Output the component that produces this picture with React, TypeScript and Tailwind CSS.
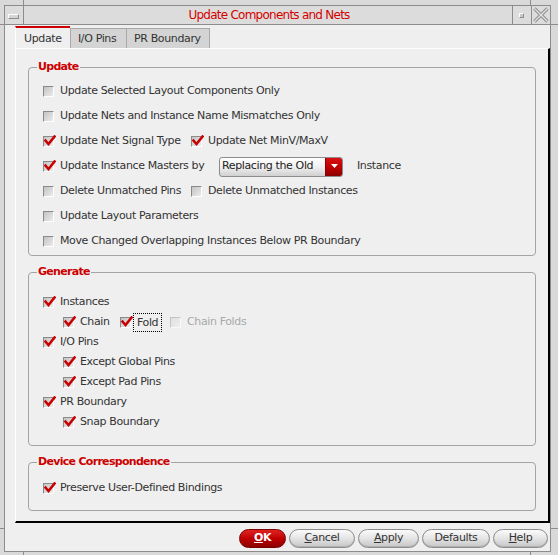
import React from "react";

function Box({ checked, disabled }: { checked?: boolean; disabled?: boolean }) {
  return (
    <span
      className={
        disabled
          ? "relative inline-block w-[11px] h-[11px] shrink-0 border border-t-[#c4c4c4] border-l-[#c4c4c4] border-b-[#f8f8f8] border-r-[#f8f8f8] bg-gradient-to-br from-[#e0e0e0] to-[#eeeeee]"
          : "relative inline-block w-[11px] h-[11px] shrink-0 border border-t-[#8a8a8a] border-l-[#8a8a8a] border-b-white border-r-white bg-gradient-to-br from-[#c4c4c4] to-[#ebebeb]"
      }
    >
      {checked && (
        <svg className="absolute left-[0px] top-[-2px]" width="12" height="12" viewBox="0 0 12 12">
          <path d="M1.5 5.5 L4.5 9 L10.5 1.5" fill="none" stroke="#c80000" strokeWidth="2.5" strokeLinecap="square" />
        </svg>
      )}
    </span>
  );
}

function Check({
  label,
  checked,
  disabled,
  focus,
  className,
}: {
  label: string;
  checked?: boolean;
  disabled?: boolean;
  focus?: boolean;
  className?: string;
}) {
  return (
    <div className={"flex items-center " + (className ?? "")}>
      <Box checked={checked} disabled={disabled} />
      {focus ? (
        <span className="ml-[2px] border border-dotted border-black px-[3px] leading-[17px] text-[#333]">{label}</span>
      ) : (
        <span className={"ml-[6px] whitespace-nowrap " + (disabled ? "text-[#a8a8a8]" : "text-[#333]")}>{label}</span>
      )}
    </div>
  );
}

function Group({ title, children, className }: { title: string; children: React.ReactNode; className?: string }) {
  return (
    <fieldset className="border border-[#a4a4a4] rounded-[4px] w-[508px]">
      <legend className="ml-[8px] px-[1px] text-[11px] leading-[14px] font-bold text-[#cc0000] tracking-[-0.7px]">{title}</legend>
      <div className={"pl-[14px] " + (className ?? "")}>{children}</div>
    </fieldset>
  );
}

function Btn({ children, w }: { children: React.ReactNode; w: string }) {
  return (
    <div
      className={
        "h-[19px] rounded-full border border-[#8c8c8c] bg-gradient-to-b from-[#fbfbfb] via-[#e4e4e4] to-[#c6c6c6] flex items-center justify-center text-[#333] text-[11px] shadow-[inset_0_-1px_0_#b0b0b0] " +
        w
      }
    >
      {children}
    </div>
  );
}

export default function App() {
  return (
    <div className="relative w-[558px] h-[555px] bg-[#d9d9d9] overflow-hidden font-['DejaVu_Sans',sans-serif] text-[11px] tracking-[-0.37px]">
      {/* frame ticks */}
      <div className="absolute left-[23px] top-0 w-px h-[5px] bg-[#8c8c8c]" />
      <div className="absolute left-[530px] top-0 w-px h-[5px] bg-[#8c8c8c]" />
      <div className="absolute left-[23px] top-[552px] w-px h-[3px] bg-[#8c8c8c]" />
      <div className="absolute left-[530px] top-[552px] w-px h-[3px] bg-[#8c8c8c]" />
      <div className="absolute left-0 top-[24px] w-[4px] h-px bg-[#8c8c8c]" />
      <div className="absolute left-0 top-[528px] w-[4px] h-px bg-[#8c8c8c]" />
      <div className="absolute left-[551px] top-[24px] w-[7px] h-px bg-[#8c8c8c]" />
      <div className="absolute left-[551px] top-[528px] w-[7px] h-px bg-[#8c8c8c]" />

      <div className="ml-[4px] mt-[5px] w-[547px] h-[547px] border border-[#8c8c8c] bg-[#efefef] flex flex-col">
        {/* title bar */}
        <div className="h-[19px] flex border-b border-[#8c8c8c] bg-[#dcdcdc]">
          <div className="w-[19px] border-r border-[#8c8c8c] flex items-center justify-center">
            <div className="w-[11px] h-[5px] border border-t-white border-l-white border-b-[#8c8c8c] border-r-[#8c8c8c] bg-[#d4d4d4] mt-[2px] ml-[-2px]" />
          </div>
          <div className="flex-1 flex items-center justify-center text-[#d40000] text-[12px] leading-[14px] pl-[2px] tracking-[-0.75px]">
            Update Components and Nets
          </div>
          <div className="w-[19px] border-l border-[#8c8c8c] flex items-center justify-center">
            <div className="w-[5px] h-[5px] border border-t-white border-l-white border-b-[#8c8c8c] border-r-[#8c8c8c] bg-[#c8c8c8] ml-[-2px]" />
          </div>
          <div className="w-[19px] border-l border-[#8c8c8c] flex items-center justify-center">
            <svg width="16" height="16" viewBox="0 0 16 16">
              <path d="M1.5 1.5 L14.5 14.5 M14.5 1.5 L1.5 14.5" stroke="#8c8c8c" strokeWidth="3.2" />
              <path d="M1.5 1.5 L14.5 14.5 M14.5 1.5 L1.5 14.5" stroke="#e4e4e4" strokeWidth="1.3" />
            </svg>
          </div>
        </div>

        {/* tabs */}
        <div className="ml-[10px] mt-[1px] flex items-end h-[22px]">
          <div className="w-[55px] h-[22px] border-t-2 border-[#cc0000] border-l border-l-white bg-[#efefef] flex items-center pl-[8px] text-[#333] leading-[14px] pt-[1px]">
            Update
          </div>
          <div className="w-[57px] h-[20px] border border-b-0 border-[#a8a8a8] bg-[#d4d4d4] flex items-center pl-[7px] text-[#333] pt-[1px]">
            I/O Pins
          </div>
          <div className="w-[83px] h-[20px] border border-b-0 border-l-0 border-[#a8a8a8] bg-[#d4d4d4] flex items-center pl-[7px] text-[#333] pt-[1px]">
            PR Boundary
          </div>
        </div>

        {/* panel */}
        <div className="ml-[10px] w-[535px] border-t border-l border-t-white border-l-white border-r-2 border-b-2 border-r-black border-b-black pl-[12px] pt-[11px] pb-[10px] flex flex-col gap-[9px]">
          <Group title="Update" className="pt-[5px] pb-[1px]">
            <div className="h-[25px] flex items-center">
              <Check label="Update Selected Layout Components Only" />
            </div>
            <div className="h-[25px] flex items-center">
              <Check label="Update Nets and Instance Name Mismatches Only" />
            </div>
            <div className="h-[25px] flex items-center">
              <Check label="Update Net Signal Type" checked className="w-[148px]" />
              <Check label="Update Net MinV/MaxV" checked />
            </div>
            <div className="h-[25px] flex items-center">
              <Check label="Update Instance Masters by" checked className="w-[176px]" />
              <div className="w-[124px] h-[20px] rounded-[3px] border border-[#8c8c8c] bg-gradient-to-b from-white via-[#f0f0f0] to-[#d0d0d0] flex items-center overflow-hidden">
                <span className="flex-1 pl-[2px] text-[#222] whitespace-nowrap">Replacing the Old</span>
                <div className="w-[17px] h-full bg-gradient-to-b from-[#d81010] via-[#c00000] to-[#8c0000] border-l border-[#8c0000] flex items-center justify-center">
                  <svg width="7" height="5" viewBox="0 0 7 5">
                    <path d="M0 0 L7 0 L3.5 4 Z" fill="#ffffff" />
                  </svg>
                </div>
              </div>
              <span className="ml-[14px] text-[#333]">Instance</span>
            </div>
            <div className="h-[25px] flex items-center">
              <Check label="Delete Unmatched Pins" className="w-[148px]" />
              <Check label="Delete Unmatched Instances" />
            </div>
            <div className="h-[25px] flex items-center">
              <Check label="Update Layout Parameters" />
            </div>
            <div className="h-[25px] flex items-center">
              <Check label="Move Changed Overlapping Instances Below PR Boundary" />
            </div>
          </Group>

          <Group title="Generate" className="pt-[13px] pb-[13px]">
            <div className="h-[20px] flex items-center">
              <Check label="Instances" checked />
            </div>
            <div className="h-[20px] flex items-center pl-[20px]">
              <Check label="Chain" checked className="w-[57px]" />
              <Check label="Fold" checked focus className="w-[50px]" />
              <Check label="Chain Folds" disabled />
            </div>
            <div className="h-[20px] flex items-center">
              <Check label="I/O Pins" checked />
            </div>
            <div className="h-[20px] flex items-center pl-[20px]">
              <Check label="Except Global Pins" checked />
            </div>
            <div className="h-[20px] flex items-center pl-[20px]">
              <Check label="Except Pad Pins" checked />
            </div>
            <div className="h-[20px] flex items-center">
              <Check label="PR Boundary" checked />
            </div>
            <div className="h-[20px] flex items-center pl-[20px]">
              <Check label="Snap Boundary" checked />
            </div>
          </Group>

          <Group title="Device Correspondence" className="pt-[9px] pb-[12px]">
            <div className="h-[20px] flex items-center">
              <Check label="Preserve User-Defined Bindings" checked />
            </div>
          </Group>
        </div>

        {/* buttons */}
        <div className="mt-[6px] flex justify-end gap-[3px] pr-[2px]">
          <div className="w-[47px] h-[19px] rounded-full border border-[#7a0000] bg-gradient-to-b from-[#e02020] via-[#c00000] to-[#8c0000] flex items-center justify-center text-white font-bold text-[11px]">
            <span>
              <span className="underline">O</span>K
            </span>
          </div>
          <Btn w="w-[66px]">
            <span>
              <span className="underline">C</span>ancel
            </span>
          </Btn>
          <Btn w="w-[61px]">
            <span>
              <span className="underline">A</span>pply
            </span>
          </Btn>
          <Btn w="w-[68px]">Defaults</Btn>
          <Btn w="w-[55px]">
            <span>
              <span className="underline">H</span>elp
            </span>
          </Btn>
        </div>
      </div>
    </div>
  );
}
